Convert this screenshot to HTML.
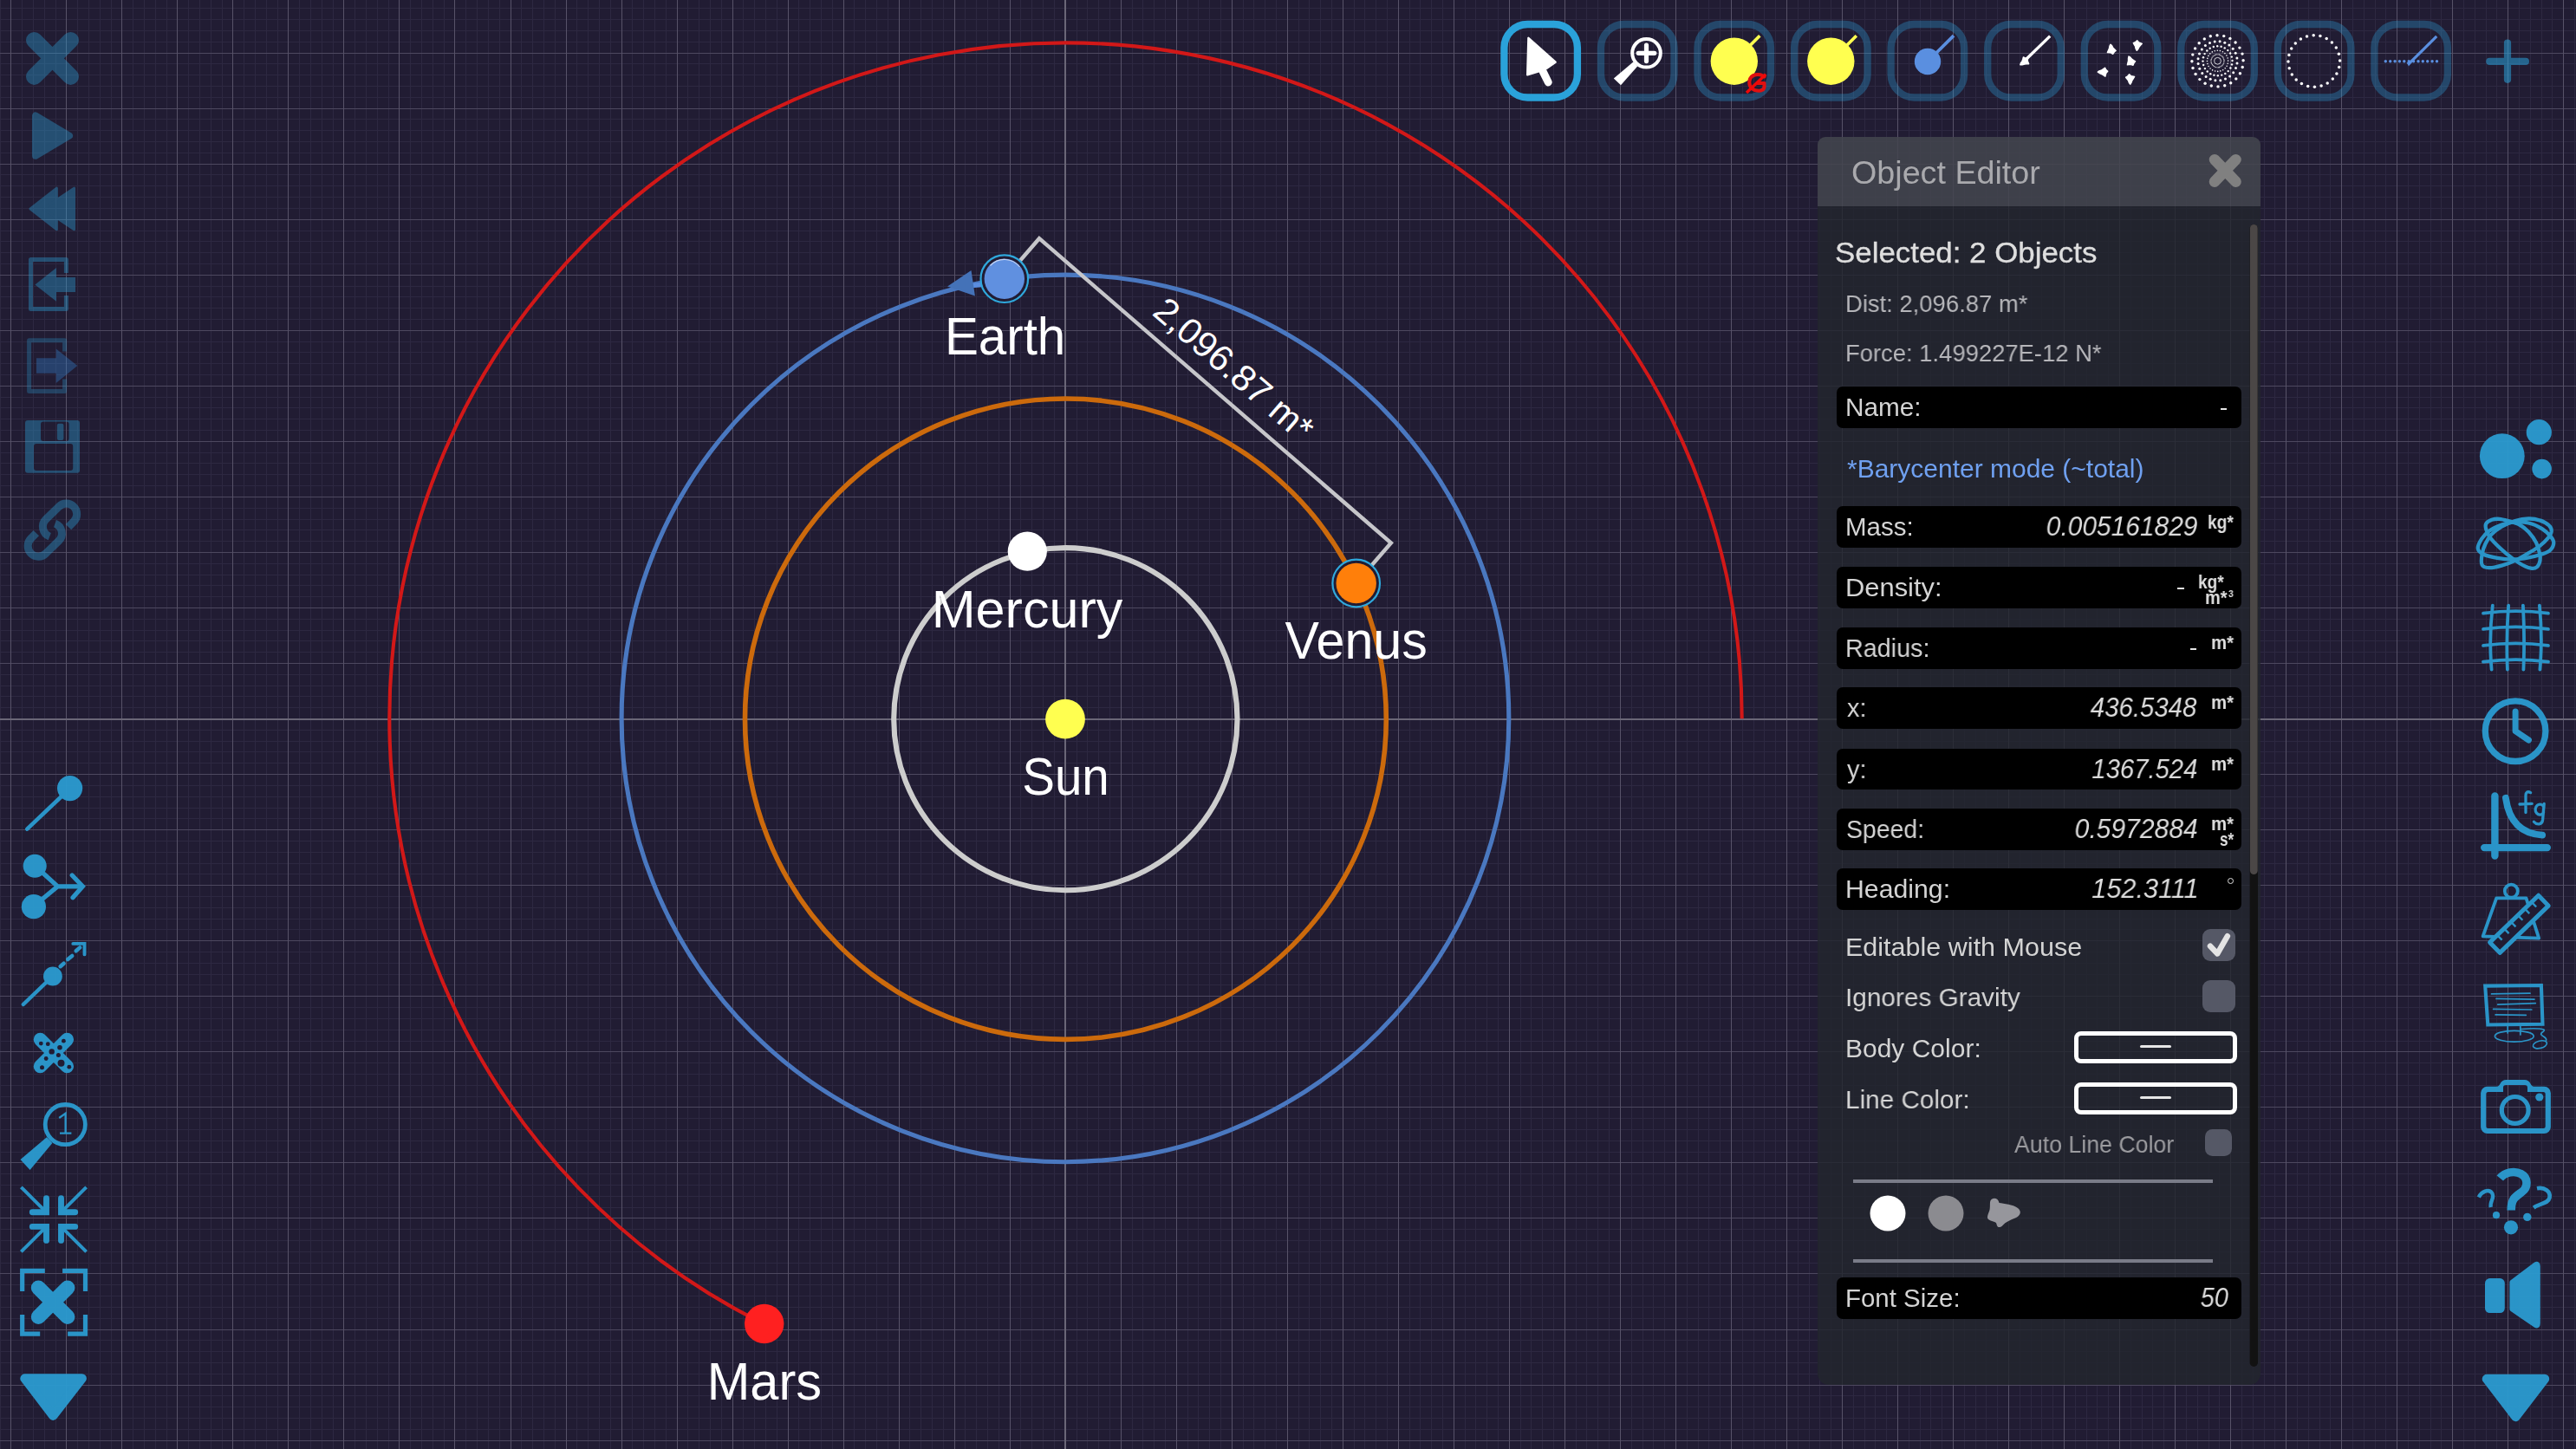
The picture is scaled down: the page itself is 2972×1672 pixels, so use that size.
<!DOCTYPE html>
<html><head><meta charset="utf-8"><title>Gravity Simulator</title>
<style>
html,body{margin:0;padding:0;background:#211c33;}
body{width:2972px;height:1672px;position:relative;overflow:hidden;font-family:"Liberation Sans", sans-serif;}
svg{position:absolute;left:0;top:0;}
.t{position:absolute;white-space:pre;line-height:1;will-change:transform;}
.f{position:absolute;background:#000;border-radius:7px;}
.cb{position:absolute;background:#555866;}
.cbox{position:absolute;border:5.5px solid #fff;border-radius:8px;box-sizing:border-box;}
.dash{position:absolute;background:#e6e6e6;}
</style></head><body>

<svg width="2972" height="1672" viewBox="0 0 2972 1672" font-family="Liberation Sans, sans-serif">
<rect width="2972" height="1672" fill="#211c33"/>
<g shape-rendering="crispEdges">
<path fill="#2d2841" d="M0 0h1v1672h-1zM25 0h1v1672h-1zM38 0h1v1672h-1zM51 0h1v1672h-1zM64 0h1v1672h-1zM89 0h1v1672h-1zM102 0h1v1672h-1zM115 0h1v1672h-1zM128 0h1v1672h-1zM153 0h1v1672h-1zM166 0h1v1672h-1zM179 0h1v1672h-1zM192 0h1v1672h-1zM217 0h1v1672h-1zM230 0h1v1672h-1zM243 0h1v1672h-1zM256 0h1v1672h-1zM281 0h1v1672h-1zM294 0h1v1672h-1zM307 0h1v1672h-1zM320 0h1v1672h-1zM345 0h1v1672h-1zM358 0h1v1672h-1zM371 0h1v1672h-1zM384 0h1v1672h-1zM409 0h1v1672h-1zM422 0h1v1672h-1zM435 0h1v1672h-1zM448 0h1v1672h-1zM473 0h1v1672h-1zM486 0h1v1672h-1zM499 0h1v1672h-1zM512 0h1v1672h-1zM537 0h1v1672h-1zM550 0h1v1672h-1zM563 0h1v1672h-1zM576 0h1v1672h-1zM601 0h1v1672h-1zM614 0h1v1672h-1zM627 0h1v1672h-1zM640 0h1v1672h-1zM665 0h1v1672h-1zM678 0h1v1672h-1zM691 0h1v1672h-1zM704 0h1v1672h-1zM729 0h1v1672h-1zM742 0h1v1672h-1zM755 0h1v1672h-1zM768 0h1v1672h-1zM793 0h1v1672h-1zM806 0h1v1672h-1zM819 0h1v1672h-1zM832 0h1v1672h-1zM857 0h1v1672h-1zM870 0h1v1672h-1zM883 0h1v1672h-1zM896 0h1v1672h-1zM921 0h1v1672h-1zM934 0h1v1672h-1zM947 0h1v1672h-1zM960 0h1v1672h-1zM985 0h1v1672h-1zM998 0h1v1672h-1zM1011 0h1v1672h-1zM1024 0h1v1672h-1zM1049 0h1v1672h-1zM1062 0h1v1672h-1zM1075 0h1v1672h-1zM1088 0h1v1672h-1zM1113 0h1v1672h-1zM1126 0h1v1672h-1zM1139 0h1v1672h-1zM1152 0h1v1672h-1zM1177 0h1v1672h-1zM1190 0h1v1672h-1zM1203 0h1v1672h-1zM1216 0h1v1672h-1zM1242 0h1v1672h-1zM1254 0h1v1672h-1zM1267 0h1v1672h-1zM1280 0h1v1672h-1zM1306 0h1v1672h-1zM1318 0h1v1672h-1zM1331 0h1v1672h-1zM1344 0h1v1672h-1zM1370 0h1v1672h-1zM1382 0h1v1672h-1zM1395 0h1v1672h-1zM1408 0h1v1672h-1zM1434 0h1v1672h-1zM1446 0h1v1672h-1zM1459 0h1v1672h-1zM1472 0h1v1672h-1zM1498 0h1v1672h-1zM1510 0h1v1672h-1zM1523 0h1v1672h-1zM1536 0h1v1672h-1zM1562 0h1v1672h-1zM1574 0h1v1672h-1zM1587 0h1v1672h-1zM1600 0h1v1672h-1zM1626 0h1v1672h-1zM1638 0h1v1672h-1zM1651 0h1v1672h-1zM1664 0h1v1672h-1zM1690 0h1v1672h-1zM1702 0h1v1672h-1zM1715 0h1v1672h-1zM1728 0h1v1672h-1zM1754 0h1v1672h-1zM1766 0h1v1672h-1zM1779 0h1v1672h-1zM1792 0h1v1672h-1zM1818 0h1v1672h-1zM1830 0h1v1672h-1zM1843 0h1v1672h-1zM1856 0h1v1672h-1zM1882 0h1v1672h-1zM1895 0h1v1672h-1zM1907 0h1v1672h-1zM1920 0h1v1672h-1zM1946 0h1v1672h-1zM1959 0h1v1672h-1zM1971 0h1v1672h-1zM1984 0h1v1672h-1zM2010 0h1v1672h-1zM2023 0h1v1672h-1zM2035 0h1v1672h-1zM2048 0h1v1672h-1zM2074 0h1v1672h-1zM2087 0h1v1672h-1zM2099 0h1v1672h-1zM2112 0h1v1672h-1zM2138 0h1v1672h-1zM2151 0h1v1672h-1zM2163 0h1v1672h-1zM2176 0h1v1672h-1zM2202 0h1v1672h-1zM2215 0h1v1672h-1zM2227 0h1v1672h-1zM2240 0h1v1672h-1zM2266 0h1v1672h-1zM2279 0h1v1672h-1zM2291 0h1v1672h-1zM2304 0h1v1672h-1zM2330 0h1v1672h-1zM2343 0h1v1672h-1zM2355 0h1v1672h-1zM2368 0h1v1672h-1zM2394 0h1v1672h-1zM2407 0h1v1672h-1zM2419 0h1v1672h-1zM2432 0h1v1672h-1zM2458 0h1v1672h-1zM2471 0h1v1672h-1zM2483 0h1v1672h-1zM2496 0h1v1672h-1zM2522 0h1v1672h-1zM2535 0h1v1672h-1zM2548 0h1v1672h-1zM2560 0h1v1672h-1zM2586 0h1v1672h-1zM2599 0h1v1672h-1zM2612 0h1v1672h-1zM2624 0h1v1672h-1zM2650 0h1v1672h-1zM2663 0h1v1672h-1zM2676 0h1v1672h-1zM2688 0h1v1672h-1zM2714 0h1v1672h-1zM2727 0h1v1672h-1zM2740 0h1v1672h-1zM2752 0h1v1672h-1zM2778 0h1v1672h-1zM2791 0h1v1672h-1zM2804 0h1v1672h-1zM2816 0h1v1672h-1zM2842 0h1v1672h-1zM2855 0h1v1672h-1zM2868 0h1v1672h-1zM2880 0h1v1672h-1zM2906 0h1v1672h-1zM2919 0h1v1672h-1zM2932 0h1v1672h-1zM2944 0h1v1672h-1zM2970 0h1v1672h-1zM0 9h2972v1h-2972zM0 22h2972v1h-2972zM0 35h2972v1h-2972zM0 48h2972v1h-2972zM0 73h2972v1h-2972zM0 86h2972v1h-2972zM0 99h2972v1h-2972zM0 112h2972v1h-2972zM0 137h2972v1h-2972zM0 150h2972v1h-2972zM0 163h2972v1h-2972zM0 176h2972v1h-2972zM0 201h2972v1h-2972zM0 214h2972v1h-2972zM0 227h2972v1h-2972zM0 240h2972v1h-2972zM0 266h2972v1h-2972zM0 278h2972v1h-2972zM0 291h2972v1h-2972zM0 304h2972v1h-2972zM0 330h2972v1h-2972zM0 342h2972v1h-2972zM0 355h2972v1h-2972zM0 368h2972v1h-2972zM0 394h2972v1h-2972zM0 406h2972v1h-2972zM0 419h2972v1h-2972zM0 432h2972v1h-2972zM0 458h2972v1h-2972zM0 470h2972v1h-2972zM0 483h2972v1h-2972zM0 496h2972v1h-2972zM0 522h2972v1h-2972zM0 534h2972v1h-2972zM0 547h2972v1h-2972zM0 560h2972v1h-2972zM0 586h2972v1h-2972zM0 599h2972v1h-2972zM0 611h2972v1h-2972zM0 624h2972v1h-2972zM0 650h2972v1h-2972zM0 663h2972v1h-2972zM0 675h2972v1h-2972zM0 688h2972v1h-2972zM0 714h2972v1h-2972zM0 727h2972v1h-2972zM0 739h2972v1h-2972zM0 752h2972v1h-2972zM0 778h2972v1h-2972zM0 791h2972v1h-2972zM0 803h2972v1h-2972zM0 816h2972v1h-2972zM0 842h2972v1h-2972zM0 855h2972v1h-2972zM0 867h2972v1h-2972zM0 880h2972v1h-2972zM0 906h2972v1h-2972zM0 919h2972v1h-2972zM0 932h2972v1h-2972zM0 944h2972v1h-2972zM0 970h2972v1h-2972zM0 983h2972v1h-2972zM0 996h2972v1h-2972zM0 1008h2972v1h-2972zM0 1034h2972v1h-2972zM0 1047h2972v1h-2972zM0 1060h2972v1h-2972zM0 1072h2972v1h-2972zM0 1098h2972v1h-2972zM0 1111h2972v1h-2972zM0 1124h2972v1h-2972zM0 1136h2972v1h-2972zM0 1162h2972v1h-2972zM0 1175h2972v1h-2972zM0 1188h2972v1h-2972zM0 1201h2972v1h-2972zM0 1226h2972v1h-2972zM0 1239h2972v1h-2972zM0 1252h2972v1h-2972zM0 1265h2972v1h-2972zM0 1290h2972v1h-2972zM0 1303h2972v1h-2972zM0 1316h2972v1h-2972zM0 1329h2972v1h-2972zM0 1354h2972v1h-2972zM0 1367h2972v1h-2972zM0 1380h2972v1h-2972zM0 1393h2972v1h-2972zM0 1418h2972v1h-2972zM0 1431h2972v1h-2972zM0 1444h2972v1h-2972zM0 1457h2972v1h-2972zM0 1482h2972v1h-2972zM0 1495h2972v1h-2972zM0 1508h2972v1h-2972zM0 1521h2972v1h-2972zM0 1546h2972v1h-2972zM0 1559h2972v1h-2972zM0 1572h2972v1h-2972zM0 1585h2972v1h-2972zM0 1610h2972v1h-2972zM0 1623h2972v1h-2972zM0 1636h2972v1h-2972zM0 1649h2972v1h-2972z"/>
<path fill="#4d485f" d="M0 61h2972v1h-2972zM0 125h2972v1h-2972zM0 189h2972v1h-2972zM0 253h2972v1h-2972zM0 317h2972v1h-2972zM0 381h2972v1h-2972zM0 445h2972v1h-2972zM0 509h2972v1h-2972zM0 573h2972v1h-2972zM0 637h2972v1h-2972zM0 701h2972v1h-2972zM0 765h2972v1h-2972zM0 829h2972v1h-2972zM0 893h2972v1h-2972zM0 957h2972v1h-2972zM0 1021h2972v1h-2972zM0 1085h2972v1h-2972zM0 1149h2972v1h-2972zM0 1213h2972v1h-2972zM0 1277h2972v1h-2972zM0 1341h2972v1h-2972zM0 1405h2972v1h-2972zM0 1469h2972v1h-2972zM0 1534h2972v1h-2972zM0 1598h2972v1h-2972zM0 1662h2972v1h-2972z"/>
<path fill="#575268" d="M12 0h1v1672h-1zM76 0h1v1672h-1zM140 0h1v1672h-1zM204 0h1v1672h-1zM268 0h1v1672h-1zM332 0h1v1672h-1zM396 0h1v1672h-1zM460 0h1v1672h-1zM524 0h1v1672h-1zM589 0h1v1672h-1zM653 0h1v1672h-1zM717 0h1v1672h-1zM781 0h1v1672h-1zM845 0h1v1672h-1zM909 0h1v1672h-1zM973 0h1v1672h-1zM1037 0h1v1672h-1zM1101 0h1v1672h-1zM1165 0h1v1672h-1zM1229 0h1v1672h-1zM1293 0h1v1672h-1zM1357 0h1v1672h-1zM1421 0h1v1672h-1zM1485 0h1v1672h-1zM1549 0h1v1672h-1zM1613 0h1v1672h-1zM1677 0h1v1672h-1zM1741 0h1v1672h-1zM1805 0h1v1672h-1zM1869 0h1v1672h-1zM1933 0h1v1672h-1zM1997 0h1v1672h-1zM2061 0h1v1672h-1zM2125 0h1v1672h-1zM2189 0h1v1672h-1zM2253 0h1v1672h-1zM2317 0h1v1672h-1zM2381 0h1v1672h-1zM2445 0h1v1672h-1zM2509 0h1v1672h-1zM2573 0h1v1672h-1zM2637 0h1v1672h-1zM2701 0h1v1672h-1zM2765 0h1v1672h-1zM2829 0h1v1672h-1zM2893 0h1v1672h-1zM2957 0h1v1672h-1z"/>
</g>
<rect x="0" y="829" width="2972" height="2" fill="#6a6677"/>
<rect x="1228" y="0" width="2" height="1672" fill="#6a6677"/>
<g fill="none">
<ellipse cx="1229.35" cy="829.7" rx="198.15" ry="197.6" stroke="#cdcdcd" stroke-width="6.1"/>
<ellipse cx="1229.4" cy="829.7" rx="369.9" ry="369.7" stroke="#cc6a0c" stroke-width="5.6"/>
<ellipse cx="1228.95" cy="828.9" rx="511.85" ry="511.8" stroke="#4a78c0" stroke-width="5.1"/>
<path d="M2009.7 829.2 A780.2 780.2 0 1 0 881.5 1527.9" stroke="#d21818" stroke-width="4.1"/>
</g>
<text x="1089.9" y="409.4" font-size="61" textLength="139.4" lengthAdjust="spacingAndGlyphs" fill="#fff">Earth</text>
<text x="1074.7" y="723.6" font-size="61" textLength="220.7" lengthAdjust="spacingAndGlyphs" fill="#fff">Mercury</text>
<text x="1482.4" y="760.4" font-size="61" textLength="164.3" lengthAdjust="spacingAndGlyphs" fill="#fff">Venus</text>
<text x="1179.2" y="917.4" font-size="61" textLength="100.6" lengthAdjust="spacingAndGlyphs" fill="#fff">Sun</text>
<text x="815.7" y="1614.9" font-size="61" textLength="132.4" lengthAdjust="spacingAndGlyphs" fill="#fff">Mars</text>
<path d="M1175.8 302.0 L1199.0 275.2 L1604.9 626.5 L1581.7 653.3" fill="none" stroke="#c6c6ca" stroke-width="4.4" stroke-linejoin="miter"/>
<text transform="translate(1402.0 450.8) rotate(40.88)" x="0" y="-18.5" text-anchor="middle" font-size="41.7" textLength="228" lengthAdjust="spacingAndGlyphs" fill="#fff">2,096.87 m*</text>
<path d="M1136 328.3 L1121 329.6" stroke="#5a8de0" stroke-width="5.5" fill="none"/>
<path d="M1093.1 330.6 L1120.5 312 L1124.9 341.6 Z" fill="#4472b8"/>
<circle cx="1185.3" cy="636.2" r="22.6" fill="#fff"/>
<circle cx="1229.0" cy="829.7" r="22.9" fill="#ffff50"/>
<circle cx="881.7" cy="1527.5" r="22.7" fill="#ff2020"/>
<circle cx="1158.8" cy="321.7" r="27" fill="#211c33"/>
<circle cx="1158.8" cy="321.7" r="27.3" fill="none" stroke="#2fa8dc" stroke-width="2.2"/>
<circle cx="1158.8" cy="321.7" r="23.2" fill="#6090e0"/>
<circle cx="1564.7" cy="673.0" r="27" fill="#211c33"/>
<circle cx="1564.7" cy="673.0" r="27.3" fill="none" stroke="#2fa8dc" stroke-width="2.2"/>
<circle cx="1564.7" cy="673.0" r="23.2" fill="#ff7f0a"/>
<path d="M1142.5 306.5 A22.4 22.4 0 0 1 1176.5 308" fill="none" stroke="#e8eefc" stroke-width="1.1" opacity="0.75"/>
</svg>
<svg width="2972" height="1672" viewBox="0 0 2972 1672">
<rect x="1735.4" y="28.0" width="84.5" height="84.5" rx="27" ry="27" fill="none" stroke="#2aa2da" stroke-width="8.3" opacity="1.00"/>
<rect x="1847.0" y="28.0" width="84.5" height="84.5" rx="27" ry="27" fill="none" stroke="#2aa2da" stroke-width="8.3" opacity="0.33"/>
<rect x="1958.5" y="28.0" width="84.5" height="84.5" rx="27" ry="27" fill="none" stroke="#2aa2da" stroke-width="8.3" opacity="0.33"/>
<rect x="2070.1" y="28.0" width="84.5" height="84.5" rx="27" ry="27" fill="none" stroke="#2aa2da" stroke-width="8.3" opacity="0.33"/>
<rect x="2181.6" y="28.0" width="84.5" height="84.5" rx="27" ry="27" fill="none" stroke="#2aa2da" stroke-width="8.3" opacity="0.33"/>
<rect x="2293.2" y="28.0" width="84.5" height="84.5" rx="27" ry="27" fill="none" stroke="#2aa2da" stroke-width="8.3" opacity="0.33"/>
<rect x="2404.8" y="28.0" width="84.5" height="84.5" rx="27" ry="27" fill="none" stroke="#2aa2da" stroke-width="8.3" opacity="0.33"/>
<rect x="2516.3" y="28.0" width="84.5" height="84.5" rx="27" ry="27" fill="none" stroke="#2aa2da" stroke-width="8.3" opacity="0.33"/>
<rect x="2627.9" y="28.0" width="84.5" height="84.5" rx="27" ry="27" fill="none" stroke="#2aa2da" stroke-width="8.3" opacity="0.33"/>
<rect x="2739.4" y="28.0" width="84.5" height="84.5" rx="27" ry="27" fill="none" stroke="#2aa2da" stroke-width="8.3" opacity="0.33"/>
<path d="M1763.4 43.8 L1762.2 86.4 L1774.5 82.6 L1784.2 78.9 L1794.6 71.7 Z" fill="#fff" stroke="#fff" stroke-width="2.4" stroke-linejoin="round"/>
<path d="M1779.2 80.5 L1786.2 94.9" stroke="#fff" stroke-width="9" stroke-linecap="round"/>
<circle cx="1899.5" cy="61.3" r="16.3" fill="none" stroke="#fff" stroke-width="4"/>
<path d="M1890.2 61.3 H1908.8 M1899.5 52 V70.6" stroke="#fff" stroke-width="5.2" stroke-linecap="round"/>
<path d="M1884.6 71.2 L1889.2 76.6 L1870 98.2 L1861.8 90.4 Z" fill="#fff"/>
<circle cx="2000.8" cy="70.7" r="27.2" fill="#ffff50"/>
<path d="M2018.8 52.7 L2030.3 41.2" stroke="#ffff50" stroke-width="3.6"/>
<circle cx="2112.3" cy="70.7" r="27.2" fill="#ffff50"/>
<path d="M2130.3 52.7 L2141.8 41.2" stroke="#ffff50" stroke-width="3.6"/>
<path d="M2035.5 88.5 C2030 84 2020 85.5 2018.5 93 C2017 101.5 2024 105.5 2031 104.5 C2034 104 2035.5 102.5 2035.5 100 V96 H2027.5" fill="none" stroke="#e01010" stroke-width="4" stroke-linejoin="round" stroke-linecap="round"/>
<path d="M2015 107 L2037.2 85.8" stroke="#f00808" stroke-width="3.4"/>
<circle cx="2224" cy="71" r="15.2" fill="#5a8fe0"/>
<path d="M2233 62 L2254 41.2" stroke="#5a8fe0" stroke-width="3.8"/>
<polygon points="2334.4,66.0 2336.5,66.9 2339.5,67.3 2339.3,70.2 2340.7,73.7 2338.0,73.9 2335.9,74.0 2333.0,74.7 2330.8,74.8 2331.4,72.8 2333.1,70.3 2333.8,68.2" fill="#fff" stroke="#fff" stroke-width="1.4" stroke-linejoin="round"/>
<path d="M2337.5 68.5 L2365.2 41.6" stroke="#fff" stroke-width="3.4"/>
<polygon points="2441.2,58.4 2439.4,59.8 2437.7,62.3 2435.2,60.8 2431.4,60.5 2432.5,58.0 2433.4,56.1 2434.0,53.1 2434.9,51.2 2436.5,52.6 2437.9,55.3 2439.5,56.8" fill="#fff" stroke="#fff" stroke-width="1.4" stroke-linejoin="round"/>
<polygon points="2461.3,49.6 2463.4,48.7 2465.7,46.8 2467.7,49.0 2471.3,50.3 2469.5,52.4 2468.1,54.0 2466.7,56.7 2465.3,58.3 2464.2,56.5 2463.5,53.5 2462.4,51.6" fill="#fff" stroke="#fff" stroke-width="1.4" stroke-linejoin="round"/>
<polygon points="2463.6,70.8 2462.1,72.5 2461.0,75.3 2458.2,74.3 2454.4,74.9 2455.0,72.2 2455.5,70.1 2455.5,67.1 2456.0,65.0 2457.8,66.1 2459.8,68.4 2461.6,69.6" fill="#fff" stroke="#fff" stroke-width="1.4" stroke-linejoin="round"/>
<polygon points="2428.5,78.2 2429.6,80.2 2431.7,82.3 2429.8,84.5 2428.9,88.2 2426.6,86.7 2424.8,85.5 2422.0,84.3 2420.3,83.1 2421.9,81.8 2424.8,80.8 2426.7,79.6" fill="#fff" stroke="#fff" stroke-width="1.4" stroke-linejoin="round"/>
<polygon points="2452.6,89.2 2454.6,88.0 2456.6,85.8 2458.8,87.7 2462.6,88.5 2461.2,90.8 2460.0,92.6 2458.9,95.4 2457.8,97.2 2456.4,95.6 2455.4,92.7 2454.0,91.0" fill="#fff" stroke="#fff" stroke-width="1.4" stroke-linejoin="round"/>
<circle cx="2558.5" cy="70.3" r="3.9" fill="none" stroke="#fff" stroke-width="0.8"/>
<circle cx="2558.5" cy="70.3" r="7.5" fill="none" stroke="#fff" stroke-width="1.2" stroke-dasharray="0.75 0.56"/>
<circle cx="2570.6" cy="70.1" r="0.80" fill="#fff"/>
<circle cx="2570.2" cy="73.2" r="0.80" fill="#fff"/>
<circle cx="2569.1" cy="76.2" r="0.80" fill="#fff"/>
<circle cx="2567.2" cy="78.7" r="0.80" fill="#fff"/>
<circle cx="2564.7" cy="80.7" r="0.80" fill="#fff"/>
<circle cx="2561.8" cy="81.9" r="0.80" fill="#fff"/>
<circle cx="2558.7" cy="82.4" r="0.80" fill="#fff"/>
<circle cx="2555.6" cy="82.0" r="0.80" fill="#fff"/>
<circle cx="2552.6" cy="80.9" r="0.80" fill="#fff"/>
<circle cx="2550.1" cy="79.0" r="0.80" fill="#fff"/>
<circle cx="2548.1" cy="76.5" r="0.80" fill="#fff"/>
<circle cx="2546.9" cy="73.6" r="0.80" fill="#fff"/>
<circle cx="2546.4" cy="70.5" r="0.80" fill="#fff"/>
<circle cx="2546.8" cy="67.4" r="0.80" fill="#fff"/>
<circle cx="2547.9" cy="64.4" r="0.80" fill="#fff"/>
<circle cx="2549.8" cy="61.9" r="0.80" fill="#fff"/>
<circle cx="2552.3" cy="59.9" r="0.80" fill="#fff"/>
<circle cx="2555.2" cy="58.7" r="0.80" fill="#fff"/>
<circle cx="2558.3" cy="58.2" r="0.80" fill="#fff"/>
<circle cx="2561.4" cy="58.6" r="0.80" fill="#fff"/>
<circle cx="2564.4" cy="59.7" r="0.80" fill="#fff"/>
<circle cx="2566.9" cy="61.6" r="0.80" fill="#fff"/>
<circle cx="2568.9" cy="64.1" r="0.80" fill="#fff"/>
<circle cx="2570.1" cy="67.0" r="0.80" fill="#fff"/>
<circle cx="2575.5" cy="70.0" r="1.20" fill="#fff"/>
<circle cx="2575.0" cy="74.4" r="1.20" fill="#fff"/>
<circle cx="2573.4" cy="78.5" r="1.20" fill="#fff"/>
<circle cx="2570.7" cy="82.1" r="1.20" fill="#fff"/>
<circle cx="2567.3" cy="84.9" r="1.20" fill="#fff"/>
<circle cx="2563.2" cy="86.6" r="1.20" fill="#fff"/>
<circle cx="2558.8" cy="87.3" r="1.20" fill="#fff"/>
<circle cx="2554.4" cy="86.8" r="1.20" fill="#fff"/>
<circle cx="2550.3" cy="85.2" r="1.20" fill="#fff"/>
<circle cx="2546.7" cy="82.5" r="1.20" fill="#fff"/>
<circle cx="2543.9" cy="79.1" r="1.20" fill="#fff"/>
<circle cx="2542.2" cy="75.0" r="1.20" fill="#fff"/>
<circle cx="2541.5" cy="70.6" r="1.20" fill="#fff"/>
<circle cx="2542.0" cy="66.2" r="1.20" fill="#fff"/>
<circle cx="2543.6" cy="62.1" r="1.20" fill="#fff"/>
<circle cx="2546.3" cy="58.5" r="1.20" fill="#fff"/>
<circle cx="2549.7" cy="55.7" r="1.20" fill="#fff"/>
<circle cx="2553.8" cy="54.0" r="1.20" fill="#fff"/>
<circle cx="2558.2" cy="53.3" r="1.20" fill="#fff"/>
<circle cx="2562.6" cy="53.8" r="1.20" fill="#fff"/>
<circle cx="2566.7" cy="55.4" r="1.20" fill="#fff"/>
<circle cx="2570.3" cy="58.1" r="1.20" fill="#fff"/>
<circle cx="2573.1" cy="61.5" r="1.20" fill="#fff"/>
<circle cx="2574.8" cy="65.6" r="1.20" fill="#fff"/>
<circle cx="2581.0" cy="72.9" r="1.50" fill="#fff"/>
<circle cx="2579.5" cy="78.6" r="1.50" fill="#fff"/>
<circle cx="2576.7" cy="83.7" r="1.50" fill="#fff"/>
<circle cx="2572.6" cy="88.0" r="1.50" fill="#fff"/>
<circle cx="2567.5" cy="91.0" r="1.50" fill="#fff"/>
<circle cx="2561.8" cy="92.7" r="1.50" fill="#fff"/>
<circle cx="2555.9" cy="92.8" r="1.50" fill="#fff"/>
<circle cx="2550.2" cy="91.3" r="1.50" fill="#fff"/>
<circle cx="2545.1" cy="88.5" r="1.50" fill="#fff"/>
<circle cx="2540.8" cy="84.4" r="1.50" fill="#fff"/>
<circle cx="2537.8" cy="79.3" r="1.50" fill="#fff"/>
<circle cx="2536.1" cy="73.6" r="1.50" fill="#fff"/>
<circle cx="2536.0" cy="67.7" r="1.50" fill="#fff"/>
<circle cx="2537.5" cy="62.0" r="1.50" fill="#fff"/>
<circle cx="2540.3" cy="56.9" r="1.50" fill="#fff"/>
<circle cx="2544.4" cy="52.6" r="1.50" fill="#fff"/>
<circle cx="2549.5" cy="49.6" r="1.50" fill="#fff"/>
<circle cx="2555.2" cy="47.9" r="1.50" fill="#fff"/>
<circle cx="2561.1" cy="47.8" r="1.50" fill="#fff"/>
<circle cx="2566.8" cy="49.3" r="1.50" fill="#fff"/>
<circle cx="2571.9" cy="52.1" r="1.50" fill="#fff"/>
<circle cx="2576.2" cy="56.2" r="1.50" fill="#fff"/>
<circle cx="2579.2" cy="61.3" r="1.50" fill="#fff"/>
<circle cx="2580.9" cy="67.0" r="1.50" fill="#fff"/>
<circle cx="2588.1" cy="69.8" r="1.70" fill="#fff"/>
<circle cx="2587.2" cy="77.5" r="1.70" fill="#fff"/>
<circle cx="2584.4" cy="84.7" r="1.70" fill="#fff"/>
<circle cx="2579.8" cy="90.9" r="1.70" fill="#fff"/>
<circle cx="2573.7" cy="95.7" r="1.70" fill="#fff"/>
<circle cx="2566.7" cy="98.8" r="1.70" fill="#fff"/>
<circle cx="2559.0" cy="99.9" r="1.70" fill="#fff"/>
<circle cx="2551.3" cy="99.0" r="1.70" fill="#fff"/>
<circle cx="2544.1" cy="96.2" r="1.70" fill="#fff"/>
<circle cx="2537.9" cy="91.6" r="1.70" fill="#fff"/>
<circle cx="2533.1" cy="85.5" r="1.70" fill="#fff"/>
<circle cx="2530.0" cy="78.5" r="1.70" fill="#fff"/>
<circle cx="2528.9" cy="70.8" r="1.70" fill="#fff"/>
<circle cx="2529.8" cy="63.1" r="1.70" fill="#fff"/>
<circle cx="2532.6" cy="55.9" r="1.70" fill="#fff"/>
<circle cx="2537.2" cy="49.7" r="1.70" fill="#fff"/>
<circle cx="2543.3" cy="44.9" r="1.70" fill="#fff"/>
<circle cx="2550.3" cy="41.8" r="1.70" fill="#fff"/>
<circle cx="2558.0" cy="40.7" r="1.70" fill="#fff"/>
<circle cx="2565.7" cy="41.6" r="1.70" fill="#fff"/>
<circle cx="2572.9" cy="44.4" r="1.70" fill="#fff"/>
<circle cx="2579.1" cy="49.0" r="1.70" fill="#fff"/>
<circle cx="2583.9" cy="55.1" r="1.70" fill="#fff"/>
<circle cx="2587.0" cy="62.1" r="1.70" fill="#fff"/>
<circle cx="2669.2" cy="40.7" r="1.75" fill="#fff"/>
<circle cx="2676.9" cy="41.6" r="1.75" fill="#fff"/>
<circle cx="2684.2" cy="44.4" r="1.75" fill="#fff"/>
<circle cx="2690.4" cy="49.0" r="1.75" fill="#fff"/>
<circle cx="2695.3" cy="55.1" r="1.75" fill="#fff"/>
<circle cx="2698.4" cy="62.2" r="1.75" fill="#fff"/>
<circle cx="2699.6" cy="69.9" r="1.75" fill="#fff"/>
<circle cx="2698.7" cy="77.6" r="1.75" fill="#fff"/>
<circle cx="2695.9" cy="84.9" r="1.75" fill="#fff"/>
<circle cx="2691.3" cy="91.1" r="1.75" fill="#fff"/>
<circle cx="2685.2" cy="96.0" r="1.75" fill="#fff"/>
<circle cx="2678.1" cy="99.1" r="1.75" fill="#fff"/>
<circle cx="2670.4" cy="100.3" r="1.75" fill="#fff"/>
<circle cx="2662.7" cy="99.4" r="1.75" fill="#fff"/>
<circle cx="2655.4" cy="96.6" r="1.75" fill="#fff"/>
<circle cx="2649.2" cy="92.0" r="1.75" fill="#fff"/>
<circle cx="2644.3" cy="85.9" r="1.75" fill="#fff"/>
<circle cx="2641.2" cy="78.8" r="1.75" fill="#fff"/>
<circle cx="2640.0" cy="71.1" r="1.75" fill="#fff"/>
<circle cx="2640.9" cy="63.4" r="1.75" fill="#fff"/>
<circle cx="2643.7" cy="56.1" r="1.75" fill="#fff"/>
<circle cx="2648.3" cy="49.9" r="1.75" fill="#fff"/>
<circle cx="2654.4" cy="45.0" r="1.75" fill="#fff"/>
<circle cx="2661.5" cy="41.9" r="1.75" fill="#fff"/>
<circle cx="2752.3" cy="70.8" r="1.7" fill="#5a8fe0"/>
<circle cx="2757.7" cy="70.8" r="1.7" fill="#5a8fe0"/>
<circle cx="2763.1" cy="70.8" r="1.7" fill="#5a8fe0"/>
<circle cx="2768.4" cy="70.8" r="1.7" fill="#5a8fe0"/>
<circle cx="2773.8" cy="70.8" r="1.7" fill="#5a8fe0"/>
<circle cx="2779.2" cy="70.8" r="1.7" fill="#5a8fe0"/>
<circle cx="2784.6" cy="70.8" r="1.7" fill="#5a8fe0"/>
<circle cx="2790.0" cy="70.8" r="1.7" fill="#5a8fe0"/>
<circle cx="2795.3" cy="70.8" r="1.7" fill="#5a8fe0"/>
<circle cx="2800.7" cy="70.8" r="1.7" fill="#5a8fe0"/>
<circle cx="2806.1" cy="70.8" r="1.7" fill="#5a8fe0"/>
<circle cx="2811.5" cy="70.8" r="1.7" fill="#5a8fe0"/>
<path d="M2778.6 74.2 L2811.2 41.8" stroke="#5a8fe0" stroke-width="3.2"/>
<path d="M2776.5 72 L2782 72 L2779 76.5 Z" fill="#5a8fe0"/>
<path d="M2872.3 70.9 H2913.9 M2893 49.7 V91.8" stroke="#2aa2da" stroke-width="8.2" stroke-linecap="round" opacity="0.55"/>
<g opacity="0.40" fill="#2b9bd0" stroke="none">
<path d="M39.5 46.4 L81.5 88.4 M81.5 46.4 L39.5 88.4" stroke="#2b9bd0" stroke-width="19" stroke-linecap="round" fill="none"/>
</g>
<g opacity="0.40" fill="#2b9bd0" stroke="#2b9bd0" stroke-linejoin="round">
<path d="M41 133.5 L41 179.7 L80 156.6 Z" stroke-width="8"/>
<path d="M35 241 L65.4 217.2 V264.8 Z M50 241 L85.5 217.2 V264.8 Z" stroke-width="3"/>
</g>
<g opacity="0.40" fill="#2b9bd0">
<path d="M76.4 314.9 V299.4 H35.5 V356.5 H76.4 V341" fill="none" stroke="#2b9bd0" stroke-width="5" stroke-linejoin="round"/>
<path d="M40.4 328.6 L65 309.1 V319.9 H87 V337 H65 V347.8 Z"/>
</g>
<path d="M74.6 405.5 V392.7 H33.6 V451.4 H74.6 V437.5" fill="none" stroke="#2b9bd0" stroke-width="5" stroke-linejoin="round" opacity="0.30"/>
<path d="M42 413.3 H64.7 V402.4 L89.3 422 L64.7 441.9 V430.7 H42 Z" fill="rgba(50,123,194,0.4)"/>
<g opacity="0.40" fill="#2b9bd0">
<path fill-rule="evenodd" d="M32 485 H89 a3 3 0 0 1 3 3 V542.8 a3 3 0 0 1 -3 3 H32 a3 3 0 0 1 -3 -3 V488 a3 3 0 0 1 3 -3 Z M50 486.6 a3 3 0 0 0 -3 3 V505.9 a3 3 0 0 0 3 3 H76.6 a3 3 0 0 0 3 -3 V489.6 a3 3 0 0 0 -3 -3 Z M42 511.9 a3 3 0 0 0 -3 3 V540 a3 3 0 0 0 3 3 H81.2 a3 3 0 0 0 3 -3 V514.9 a3 3 0 0 0 -3 -3 Z"/>
<rect x="65.9" y="488.7" width="7.5" height="19.3" rx="2"/>
</g>
<g opacity="0.40" fill="none" stroke="#2b9bd0" stroke-width="9">
<path d="M79.0 608.1 L84.85 602.06 A12.15 12.15 0 1 0 67.66 584.9 L53.17 598.96 A12.15 12.15 0 0 0 57.27 619.1"/>
<path d="M79.0 608.1 L84.85 602.06 A12.15 12.15 0 1 0 67.66 584.9 L53.17 598.96 A12.15 12.15 0 0 0 57.27 619.1" transform="rotate(180 60.4 611.6)"/>
</g>
<g opacity="0.95" fill="#2b9bd0" stroke="#2b9bd0" stroke-linecap="round" stroke-linejoin="round">
<circle cx="80.6" cy="909.6" r="14.6" stroke="none"/>
<path d="M31.3 956.6 L72 918" stroke-width="4.6" fill="none"/>
<circle cx="40.2" cy="999.3" r="13.5" stroke="none"/>
<circle cx="38.9" cy="1046.2" r="14.1" stroke="none"/>
<path d="M48 1006 L66.5 1022.8 L47 1039 M66.5 1022.8 H95" stroke-width="5.2" fill="none" stroke-linecap="butt" stroke-linejoin="miter"/>
<path d="M83.2 1010 L95.4 1022.8 L84 1035.8" stroke-width="5.2" fill="none" stroke-linejoin="miter"/>
<circle cx="60.9" cy="1126.5" r="10.9" stroke="none"/>
<path d="M26.9 1159 L55 1132" stroke-width="4.5" fill="none"/>
<path d="M69.6 1115.2 L73.6 1111.7 M78.2 1107 L83.2 1102.9 M87.7 1097.3 L92.2 1093.4" stroke-width="4.5" fill="none"/>
<path d="M84.3 1088.9 H97.5 V1101.4" stroke-width="3.9" fill="none" stroke-linejoin="miter"/>
</g>
<g opacity="0.95">
<path d="M46.4 1199.5 L77.4 1230.5 M77.4 1199.5 L46.4 1230.5" stroke="#2b9bd0" stroke-width="15.4" stroke-linecap="round" fill="none"/>
<circle cx="47.3" cy="1204.1" r="2.4" fill="#211c33"/>
<circle cx="55.3" cy="1204.7" r="2.4" fill="#211c33"/>
<circle cx="73.4" cy="1201.2" r="2.4" fill="#211c33"/>
<circle cx="69.0" cy="1208.7" r="2.8" fill="#211c33"/>
<circle cx="59.7" cy="1213.4" r="3.2" fill="#211c33"/>
<circle cx="67.4" cy="1217.5" r="2.5" fill="#211c33"/>
<circle cx="53.2" cy="1221.5" r="2.4" fill="#211c33"/>
<circle cx="70.5" cy="1226.7" r="4.0" fill="#211c33"/>
<circle cx="48.5" cy="1231.7" r="2.5" fill="#211c33"/>
<circle cx="79.8" cy="1231.2" r="2.4" fill="#211c33"/>
</g>
<g opacity="0.95" fill="#2b9bd0" stroke="#2b9bd0">
<circle cx="75.3" cy="1297.6" r="23.1" fill="none" stroke-width="4.8"/>
<path d="M53.9 1312.2 L60.4 1319.1 L34.6 1350 L23.5 1338 Z" stroke="none"/>
<path d="M68.2 1290 L75.6 1284.8 V1307.6 M69 1307.7 H82.4" fill="none" stroke-width="2.3"/>
</g>
<g opacity="0.95" fill="none" stroke="#2b9bd0" stroke-linecap="round" stroke-linejoin="round">
<path d="M24.4 1369.9 L53.5 1398.8" stroke-width="3.9" stroke-linecap="butt"/>
<path d="M53.5 1382.8 L53.5 1398.8 L37.3 1398.8" stroke-width="6.9" stroke-linejoin="miter"/>
<path d="M24.4 1444.3 L53.5 1415.4" stroke-width="3.9" stroke-linecap="butt"/>
<path d="M53.5 1431.4 L53.5 1415.4 L37.3 1415.4" stroke-width="6.9" stroke-linejoin="miter"/>
<path d="M99.6 1369.9 L70.5 1398.8" stroke-width="3.9" stroke-linecap="butt"/>
<path d="M70.5 1382.8 L70.5 1398.8 L86.7 1398.8" stroke-width="6.9" stroke-linejoin="miter"/>
<path d="M99.6 1444.3 L70.5 1415.4" stroke-width="3.9" stroke-linecap="butt"/>
<path d="M70.5 1431.4 L70.5 1415.4 L86.7 1415.4" stroke-width="6.9" stroke-linejoin="miter"/>
</g>
<g opacity="0.95" fill="none" stroke="#2b9bd0">
<path d="M25.7 1490 V1466.4 H51.8 M72.1 1466.4 H98.5 V1490 M98.5 1517 V1539.2 H78.1 M46.2 1539.2 H25.7 V1517" stroke-width="5.2"/>
<path d="M44.3 1485.9 L77.9 1519.5 M77.9 1485.9 L44.3 1519.5" stroke-width="17" stroke-linecap="round"/>
</g>
<path d="M28.6 1590.6 H94.6 L61.3 1633.6 Z" fill="#2b9bd0" stroke="#2b9bd0" stroke-width="10.6" stroke-linejoin="round" opacity="0.95"/>
<g opacity="0.95" fill="#2b9bd0" stroke="#2b9bd0" stroke-linecap="round" stroke-linejoin="round">
<circle cx="2886.8" cy="526.2" r="25.9" stroke="none"/>
<circle cx="2929.3" cy="498.7" r="14.6" stroke="none"/>
<circle cx="2932.6" cy="541.1" r="11.3" stroke="none"/>
<g fill="none" stroke-width="4.3">
<path d="M2858.8 633.0 C2858.4 630.0 2860.8 625.5 2862.9 622.1 C2865.1 618.7 2867.9 615.5 2871.7 612.8 C2875.6 610.0 2881.6 607.2 2886.2 605.5 C2890.9 603.8 2894.5 603.0 2899.7 602.7 C2904.9 602.3 2911.8 602.2 2917.3 603.5 C2922.8 604.7 2928.6 607.6 2932.8 610.2 C2937.0 612.8 2940.4 616.3 2942.7 619.0 C2944.9 621.7 2946.4 623.6 2946.3 626.2 C2946.2 628.9 2944.5 632.8 2942.1 635.0 C2939.7 637.3 2935.9 638.3 2931.8 639.7 C2927.6 641.1 2922.6 642.4 2917.3 643.3 C2911.9 644.3 2905.7 645.3 2899.7 645.4 C2893.7 645.5 2886.7 644.8 2881.1 643.8 C2875.4 642.9 2869.2 641.5 2865.5 639.7 C2861.8 637.9 2859.2 635.9 2858.8 633.0 Z"/>
<path d="M2868.6 611.7 C2867.6 608.8 2867.1 606.5 2868.1 604.5 C2869.2 602.5 2872.3 600.8 2874.8 599.8 C2877.4 598.9 2880.5 598.6 2883.6 598.8 C2886.8 599.0 2890.1 600.0 2894.0 601.1 C2897.9 602.2 2903.1 603.4 2906.9 605.5 C2910.8 607.6 2914.1 610.4 2917.3 613.8 C2920.5 617.3 2923.9 622.0 2926.1 626.2 C2928.2 630.5 2929.5 635.7 2930.2 639.2 C2931.0 642.6 2931.0 644.4 2930.5 646.9 C2930.0 649.4 2928.9 652.7 2927.1 654.2 C2925.4 655.6 2923.2 656.4 2919.9 655.7 C2916.5 655.0 2911.7 652.9 2906.9 650.0 C2902.2 647.2 2896.8 643.3 2891.4 638.7 C2886.0 634.0 2878.1 626.6 2874.3 622.1 C2870.5 617.6 2869.7 614.7 2868.6 611.7 Z"/>
<path d="M2863.5 651.6 C2862.1 648.9 2863.0 643.2 2863.7 639.2 C2864.4 635.1 2865.8 631.0 2867.6 627.3 C2869.4 623.6 2871.2 620.2 2874.3 616.9 C2877.4 613.6 2881.7 610.2 2886.2 607.6 C2890.8 605.0 2896.6 602.6 2901.8 601.1 C2906.9 599.6 2912.5 598.7 2917.3 598.5 C2922.0 598.4 2926.3 599.0 2930.2 600.4 C2934.2 601.7 2938.9 604.4 2941.1 606.6 C2943.3 608.7 2943.9 610.9 2943.7 613.3 C2943.4 615.7 2941.9 618.2 2939.5 621.1 C2937.2 623.9 2933.4 627.5 2929.7 630.4 C2926.0 633.2 2921.9 635.4 2917.3 638.1 C2912.6 640.9 2906.9 644.5 2901.8 646.9 C2896.6 649.4 2891.2 651.2 2886.2 652.6 C2881.2 654.0 2875.5 655.4 2871.7 655.2 C2867.9 655.0 2864.8 654.3 2863.5 651.6 Z"/>
</g>
<g fill="none" stroke-width="3.8">
<path d="M2875.8 698.6 Q2871.4 735.5 2874.6 772.6"/>
<path d="M2894.1 698.6 Q2891.3 735.5 2892.9 772.6"/>
<path d="M2910.9 698.6 Q2913.0 735.5 2911.4 772.6"/>
<path d="M2929.9 698.6 Q2933.6 735.5 2930.4 772.6"/>
<path d="M2865 707.7 Q2902.5 702.7 2940 707.7"/>
<path d="M2865 725.9 Q2902.5 720.9 2940 725.9"/>
<path d="M2865 744.9 Q2902.5 739.9 2940 744.9"/>
<path d="M2865 763.7 Q2902.5 758.5 2940 763.7"/>
</g>
<circle cx="2902.1" cy="843.7" r="34.8" fill="none" stroke-width="7.3"/>
<path d="M2902.1 821 V843.7 L2917.4 854" fill="none" stroke-width="7"/>
<path d="M2878.4 918.5 V987.6 M2866.2 978.1 H2938.8" fill="none" stroke-width="8.4"/>
<path d="M2890.9 920.8 C2894 943 2905 962 2933.2 963.6" fill="none" stroke-width="7.8"/>
<path d="M2919.6 914.6 C2916 912.5 2914 914.5 2914 918 V937.6 M2907 928 L2921.2 927.3" fill="none" stroke-width="3.3"/>
<path d="M2935 931.5 A5.2 6 0 1 0 2934.6 937.5 M2935.2 927.5 L2933.6 946 C2933 951.5 2927 952.5 2923.4 948.2" fill="none" stroke-width="3.3"/>
<circle cx="2897.3" cy="1028.2" r="7.5" fill="none" stroke-width="3.8"/>
<path d="M2880.2 1036.3 H2914.5 L2929.2 1082.6 L2864.6 1080.4 Z" fill="none" stroke-width="3.8"/>
<g transform="translate(2906.4 1066.3) rotate(-44)">
<rect x="-39" y="-8.3" width="78" height="16.6" fill="#211c33" stroke-width="5"/>
<path d="M-27 -8 V-0.5" fill="none" stroke-width="2.4" stroke-linecap="butt"/>
<path d="M-16 -8 V-0.5" fill="none" stroke-width="2.4" stroke-linecap="butt"/>
<path d="M-5 -8 V-0.5" fill="none" stroke-width="2.4" stroke-linecap="butt"/>
<path d="M6 -8 V-0.5" fill="none" stroke-width="2.4" stroke-linecap="butt"/>
<path d="M17 -8 V-0.5" fill="none" stroke-width="2.4" stroke-linecap="butt"/>
<path d="M28 -8 V-0.5" fill="none" stroke-width="2.4" stroke-linecap="butt"/>
</g>
<path d="M2867.2 1137.6 L2931.9 1137 L2933.5 1181.8 L2870.3 1182.5 Z" fill="none" stroke-width="4.1" stroke-linejoin="miter"/>
<g fill="none" stroke-width="1.7">
<path d="M2874.5 1146.9 L2919.0 1146.2"/>
<path d="M2880.0 1152.4 L2924.0 1153.1"/>
<path d="M2881.7 1159.1 L2925.3 1157.6"/>
<path d="M2876.6 1164.4 L2920.8 1165.0"/>
<path d="M2879.1 1170.9 L2914.3 1171.3"/>
<path d="M2893.2 1184.5 V1192 M2907.9 1184.5 V1194"/>
<ellipse cx="2900.8" cy="1195.7" rx="22.4" ry="6.4"/>
<path d="M2908.4 1187.5 C2920 1186.5 2930 1186.5 2935 1188 C2937 1190 2930 1191.5 2932 1194 C2934 1196.5 2939 1197.5 2937.5 1200.5"/>
<ellipse cx="2930.4" cy="1205.3" rx="8.2" ry="4.2" transform="rotate(-14 2930.4 1205.3)"/>
</g>
<path fill-rule="evenodd" stroke="none" d="M2869.7 1253.7 H2880.5 C2882.5 1253.7 2883.5 1252.5 2884.5 1250.5 C2886 1247.5 2888 1245.9 2891.5 1245.9 H2912.5 C2916 1245.9 2918 1247.5 2919.5 1250.5 C2920.5 1252.5 2921.5 1253.7 2923.5 1253.7 H2935.3 A7.6 7.6 0 0 1 2942.9 1261.3 V1300.5 A7.6 7.6 0 0 1 2935.3 1308.1 H2869.7 A7.6 7.6 0 0 1 2862.1 1300.5 V1261.3 A7.6 7.6 0 0 1 2869.7 1253.7 Z M2870.8 1259.9 H2888 V1255.1 Q2888 1252.1 2891 1252.1 H2913 Q2916 1252.1 2916 1255.1 V1259.9 H2934.2 Q2936.7 1259.9 2936.7 1262.4 V1299.4 Q2936.7 1301.9 2934.2 1301.9 H2870.8 Q2868.3 1301.9 2868.3 1299.4 V1262.4 Q2868.3 1259.9 2870.8 1259.9 Z"/>
<circle cx="2901.7" cy="1280.9" r="15.4" fill="none" stroke-width="5.2"/>
<circle cx="2929.8" cy="1266" r="4.6" stroke="none"/>
<path d="M2884.3 1359.6 C2890 1352.5 2901 1350.5 2908.5 1354.5 C2917 1359 2917 1370 2909.5 1375.5 C2902 1381 2897.2 1383 2897.2 1396.6" fill="none" stroke-width="9.6" stroke-linecap="butt"/>
<circle cx="2897" cy="1416.3" r="8.1" stroke="none"/>
<path d="M2859.8 1381.4 C2863 1375 2871 1371.5 2875 1376.5 C2879 1382 2872 1386.5 2873.8 1393" fill="none" stroke-width="4.4" stroke-linecap="butt"/>
<circle cx="2880" cy="1402.2" r="4.1" stroke="none"/>
<path d="M2927 1371.2 C2936 1369.5 2943 1375 2941.5 1382 C2940 1389 2930 1388.5 2923.2 1393.6" fill="none" stroke-width="4.7" stroke-linecap="butt"/>
<circle cx="2915.8" cy="1404.4" r="4.7" stroke="none"/>
<rect x="2867" y="1475.1" width="22.8" height="39.9" rx="5.5" stroke="none"/>
<path d="M2898.4 1479.6 L2925.6 1459.2 Q2927.8 1458 2927.8 1461 V1527 Q2927.8 1530.6 2925.4 1529 L2898.4 1510.6 Z" stroke-width="6"/>
<path d="M2869 1591.1 H2935.9 L2902.4 1634.9 Z" stroke-width="10.6"/>
</g>
</svg>
<div style="position:absolute;left:2097px;top:237.7px;width:510.8px;height:1360px;border-radius:0 0 13px 13px;background:rgba(35,38,46,0.81);"></div>
<div style="position:absolute;left:2097px;top:158px;width:510.8px;height:79.7px;border-radius:9px 9px 0 0;background:rgba(67,70,78,0.86);"></div>
<div class="cb" style="left:2541px;top:1072.2px;width:37.8px;height:37.2px;border-radius:9px"></div>
<div class="cb" style="left:2541px;top:1131.1px;width:37.8px;height:37.2px;border-radius:9px"></div>
<div class="cb" style="left:2544.1px;top:1303px;width:30.8px;height:30.9px;border-radius:8.5px"></div>
<svg width="2972" height="1672" viewBox="0 0 2972 1672"><path d="M2555 184.2 L2579.5 209.6 M2579.5 184.2 L2555 209.6" stroke="#808080" stroke-width="12.6" stroke-linecap="round" fill="none"/>
<rect x="2595.6" y="259" width="9.4" height="1318" rx="4.7" fill="#121212"/>
<rect x="2595.9" y="259" width="8.8" height="750" rx="4.4" fill="#4b4746"/>
<path d="M2550 1091.7 L2558.3 1100.4 L2569.9 1080.2" stroke="#e4e4e4" stroke-width="6.5" stroke-linecap="round" stroke-linejoin="round" fill="none"/>
<circle cx="2178" cy="1400" r="20.5" fill="#fff"/>
<circle cx="2245" cy="1400" r="20.5" fill="#8b8b90"/>
<path d="M2297.5 1384 C2301 1381.5 2305.5 1383 2306.5 1388 C2312 1389 2322 1389.5 2328 1394 C2333 1398 2331 1403 2325 1405.5 C2319 1408 2314 1410 2310.5 1414 C2308 1417 2304 1417 2303.5 1412.5 C2303 1409 2297 1409.5 2294 1407 C2291.5 1404.5 2294.5 1400 2295.5 1396 C2296.5 1391.5 2295 1386 2297.5 1384 Z" fill="#96969c"/>
</svg>
<div class="f" style="left:2119.2px;top:446.1px;width:466.7px;height:47.7px"></div>
<div class="f" style="left:2119.2px;top:584.0px;width:466.7px;height:47.7px"></div>
<div class="f" style="left:2119.2px;top:654.0px;width:466.7px;height:47.7px"></div>
<div class="f" style="left:2119.2px;top:724.0px;width:466.7px;height:47.7px"></div>
<div class="f" style="left:2119.2px;top:793.1px;width:466.7px;height:47.7px"></div>
<div class="f" style="left:2119.2px;top:863.5px;width:466.7px;height:47.7px"></div>
<div class="f" style="left:2119.2px;top:932.9px;width:466.7px;height:47.7px"></div>
<div class="f" style="left:2119.2px;top:1002.0px;width:466.7px;height:47.7px"></div>
<div class="f" style="left:2119.2px;top:1474.0px;width:466.7px;height:47.7px"></div>
<div class="dash" style="left:2562.2px;top:470.9px;width:6.6px;height:1.9px"></div>
<div class="dash" style="left:2512.0px;top:678.3px;width:7.6px;height:1.9px"></div>
<div class="dash" style="left:2526.7px;top:748.4px;width:7.5px;height:1.9px"></div>
<div style="position:absolute;left:2570px;top:1012.8px;width:7.4px;height:7.4px;border:1.9px solid #e0e0e0;border-radius:50%;box-sizing:border-box"></div>
<div class="cbox" style="left:2393.1px;top:1190.2px;width:187.7px;height:36.7px"></div>
<div class="cbox" style="left:2393.1px;top:1248.8px;width:187.7px;height:36.9px"></div>
<div class="dash" style="left:2469px;top:1206.2px;width:36.3px;height:3px;border-radius:1.5px"></div>
<div class="dash" style="left:2469px;top:1264.9px;width:36.3px;height:3px;border-radius:1.5px"></div>
<div style="position:absolute;left:2138px;top:1361px;width:415px;height:4px;background:#7a7c88"></div>
<div style="position:absolute;left:2138px;top:1453.2px;width:415px;height:4px;background:#7a7c88"></div>
<span class="t" style="left:2136.27px;transform-origin:0 0;top:181.5px;font-size:36.63px;color:#a9a9ad;transform:scaleX(1.0289);">Object Editor</span>
<span class="t" style="left:2116.77px;transform-origin:0 0;top:275.2px;font-size:33.72px;color:#dedede;transform:scaleX(1.0343);-webkit-text-stroke:0.35px #dedede;">Selected: 2 Objects</span>
<span class="t" style="left:2129.33px;transform-origin:0 0;top:337.4px;font-size:27.91px;color:#b6b6ba;transform:scaleX(0.9826);">Dist: 2,096.87 m*</span>
<span class="t" style="left:2129.34px;transform-origin:0 0;top:393.7px;font-size:27.91px;color:#b6b6ba;transform:scaleX(0.9820);">Force: 1.499227E-12 N*</span>
<span class="t" style="left:2130.70px;transform-origin:0 0;top:525.6px;font-size:29.36px;color:#6fa0f0;transform:scaleX(1.0214);">*Barycenter mode (~total)</span>
<span class="t" style="left:2128.97px;transform-origin:0 0;top:455.2px;font-size:29.36px;color:#d4d4d4;transform:scaleX(1.0132);">Name:</span>
<span class="t" style="left:2128.99px;transform-origin:0 0;top:593.1px;font-size:29.36px;color:#d4d4d4;transform:scaleX(1.0048);">Mass:</span>
<span class="t" style="left:2128.90px;transform-origin:0 0;top:663.1px;font-size:29.36px;color:#d4d4d4;transform:scaleX(1.0520);">Density:</span>
<span class="t" style="left:2129.04px;transform-origin:0 0;top:733.1px;font-size:29.36px;color:#d4d4d4;transform:scaleX(0.9781);">Radius:</span>
<span class="t" style="left:2131.00px;transform-origin:0 0;top:802.2px;font-size:29.36px;color:#d4d4d4;transform:scaleX(0.9816);">x:</span>
<span class="t" style="left:2131.00px;transform-origin:0 0;top:872.6px;font-size:29.36px;color:#d4d4d4;transform:scaleX(0.9816);">y:</span>
<span class="t" style="left:2130.03px;transform-origin:0 0;top:942.0px;font-size:29.36px;color:#d4d4d4;transform:scaleX(0.9678);">Speed:</span>
<span class="t" style="left:2128.94px;transform-origin:0 0;top:1011.1px;font-size:29.36px;color:#d4d4d4;transform:scaleX(1.0303);">Heading:</span>
<span class="t" style="left:2128.99px;transform-origin:0 0;top:1483.1px;font-size:29.36px;color:#d4d4d4;transform:scaleX(1.0030);">Font Size:</span>
<span class="t" style="right:436.64px;transform-origin:100% 0;top:592.2px;font-size:31.25px;color:#dcdcdc;font-style:italic;transform:scaleX(0.9575);">0.005161829</span>
<span class="t" style="right:437.58px;transform-origin:100% 0;top:801.3px;font-size:31.25px;color:#dcdcdc;font-style:italic;transform:scaleX(0.9407);">436.5348</span>
<span class="t" style="right:436.64px;transform-origin:100% 0;top:871.7px;font-size:31.25px;color:#dcdcdc;font-style:italic;transform:scaleX(0.9364);">1367.524</span>
<span class="t" style="right:436.63px;transform-origin:100% 0;top:941.1px;font-size:31.25px;color:#dcdcdc;font-style:italic;transform:scaleX(0.9621);">0.5972884</span>
<span class="t" style="right:435.46px;transform-origin:100% 0;top:1010.2px;font-size:31.25px;color:#dcdcdc;font-style:italic;transform:scaleX(0.9828);">152.3111</span>
<span class="t" style="right:401.57px;transform-origin:100% 0;top:1482.2px;font-size:31.25px;color:#dcdcdc;font-style:italic;transform:scaleX(0.9214);">50</span>
<span class="t" style="left:2547.01px;transform-origin:0 0;top:591.6px;font-size:21.66px;color:#e0e0e0;font-weight:bold;transform:scaleX(0.8866);">kg*</span>
<span class="t" style="left:2536.32px;transform-origin:0 0;top:661.4px;font-size:21.66px;color:#e0e0e0;font-weight:bold;transform:scaleX(0.8806);">kg*</span>
<span class="t" style="left:2543.58px;transform-origin:0 0;top:679.3px;font-size:21.66px;color:#e0e0e0;font-weight:bold;transform:scaleX(0.9209);">m*</span>
<span class="t" style="left:2571.40px;transform-origin:0 0;top:679.5px;font-size:11.05px;color:#e0e0e0;font-weight:bold;transform:scaleX(0.9333);">3</span>
<span class="t" style="left:2550.86px;transform-origin:0 0;top:730.8px;font-size:21.66px;color:#e0e0e0;font-weight:bold;transform:scaleX(0.9392);">m*</span>
<span class="t" style="left:2550.86px;transform-origin:0 0;top:800.4px;font-size:21.66px;color:#e0e0e0;font-weight:bold;transform:scaleX(0.9392);">m*</span>
<span class="t" style="left:2550.86px;transform-origin:0 0;top:870.8px;font-size:21.66px;color:#e0e0e0;font-weight:bold;transform:scaleX(0.9392);">m*</span>
<span class="t" style="left:2550.86px;transform-origin:0 0;top:939.8px;font-size:21.66px;color:#e0e0e0;font-weight:bold;transform:scaleX(0.9392);">m*</span>
<span class="t" style="left:2560.80px;transform-origin:0 0;top:958.1px;font-size:21.66px;color:#e0e0e0;font-weight:bold;transform:scaleX(0.7888);">s*</span>
<span class="t" style="left:2129.26px;transform-origin:0 0;top:1077.6px;font-size:29.94px;color:#d4d4d4;transform:scaleX(1.0197);">Editable with Mouse</span>
<span class="t" style="left:2129.31px;transform-origin:0 0;top:1136.1px;font-size:29.94px;color:#d4d4d4;transform:scaleX(0.9940);">Ignores Gravity</span>
<span class="t" style="left:2129.30px;transform-origin:0 0;top:1194.6px;font-size:29.94px;color:#d4d4d4;transform:scaleX(1.0020);">Body Color:</span>
<span class="t" style="left:2129.32px;transform-origin:0 0;top:1253.7px;font-size:29.94px;color:#d4d4d4;transform:scaleX(0.9918);">Line Color:</span>
<span class="t" style="left:2323.60px;transform-origin:0 0;top:1306.5px;font-size:27.76px;color:#9c9ca0;transform:scaleX(0.9631);">Auto Line Color</span>
</body></html>
